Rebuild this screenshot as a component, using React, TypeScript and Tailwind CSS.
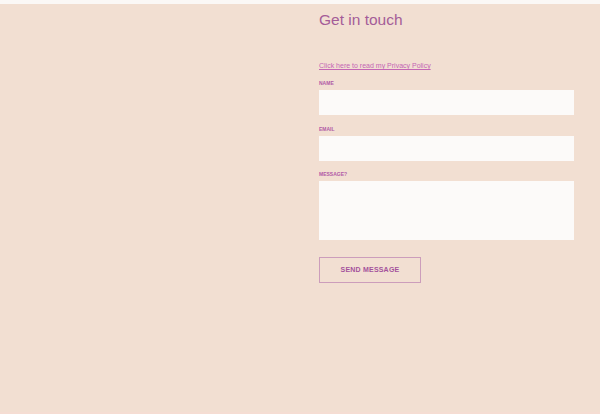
export default function App() {
  return (
    <div className="flex h-[414px] w-[600px] flex-col bg-[#f2dfd2] font-['Liberation_Sans',Arial,sans-serif]">
      <div className="h-[4px] bg-[#fbf8f6]" />
      <div className="flex flex-1">
        <div className="w-[319px]" />
        <div className="flex w-[255px] flex-col pt-[7px]">
          <h1 className="text-[15.5px] leading-[18px] text-[#a45c98]">Get in touch</h1>
          <a href="#" className="mt-[32px] text-[7px] leading-[9px] text-[#c466b4] underline">
            Click here to read my Privacy Policy
          </a>
          <label className="mt-[10px] text-[5px] font-bold leading-[7px] text-[#b15aa6]">NAME</label>
          <input className="mt-[3px] h-[25px] w-full bg-[#fcfaf9] outline-none" />
          <label className="mt-[11px] text-[5px] font-bold leading-[7px] text-[#b15aa6]">EMAIL</label>
          <input className="mt-[3px] h-[25px] w-full bg-[#fcfaf9] outline-none" />
          <label className="mt-[10px] text-[5px] font-bold leading-[7px] text-[#b15aa6]">MESSAGE?</label>
          <textarea className="mt-[3px] h-[59px] w-full resize-none bg-[#fcfaf9] outline-none" />
          <button className="mt-[17px] h-[26px] w-[102px] border border-[#cc9dbb] text-[7px] font-bold tracking-[0.2px] text-[#a4529c]">
            SEND MESSAGE
          </button>
        </div>
      </div>
      <div className="h-[2px] bg-[#f5ddd3]" />
    </div>
  );
}
